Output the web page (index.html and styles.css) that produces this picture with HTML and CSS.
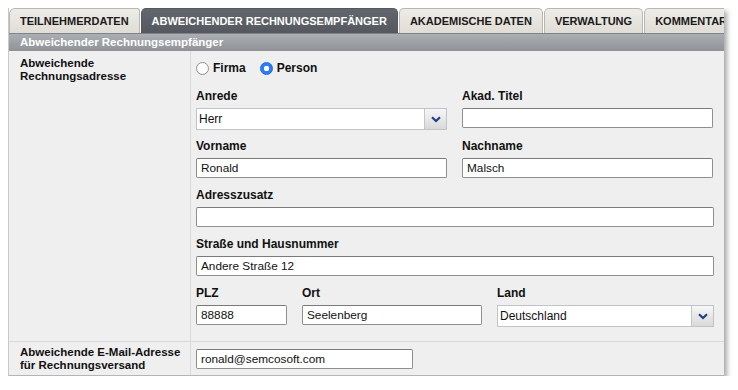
FILE: index.html
```html
<!DOCTYPE html>
<html lang="de">
<head>
	<meta charset="UTF-8">
	<title>Abweichender Rechnungsempfänger</title>
	<link rel="stylesheet" href="styles.css">
</head>
<body>
	<div class="panel">
		<!-- reiter -->
		<ul class="tabs">
			<li class="tab first">TEILNEHMERDATEN</li>
			<li class="tab active">ABWEICHENDER RECHNUNGSEMPFÄNGER</li>
			<li class="tab">AKADEMISCHE DATEN</li>
			<li class="tab">VERWALTUNG</li>
			<li class="tab last">KOMMENTAR</li>
		</ul>

		<div class="sectionTitle">Abweichender Rechnungsempfänger</div>

		<div class="row">
			<div class="rowLabel">Abweichende<br>Rechnungsadresse</div>
			<div class="rowFields">
				<div class="radios">
					<label class="radio"><input type="radio" name="typ"> Firma</label>
					<label class="radio"><input type="radio" name="typ" checked> Person</label>
				</div>

				<div class="line">
					<div class="field half">
						<div class="fieldLabel">Anrede</div>
						<div class="select">
							<span class="selectValue">Herr</span>
							<span class="selectBtn">
								<svg width="10" height="7" viewBox="0 0 10 7"><path d="M1 1.2 L5 5 L9 1.2" stroke="#1f3f86" stroke-width="2.2" fill="none"/></svg>
							</span>
						</div>
					</div>
					<div class="field half">
						<div class="fieldLabel">Akad. Titel</div>
						<input class="text" type="text" value="">
					</div>
				</div>

				<div class="line">
					<div class="field half">
						<div class="fieldLabel">Vorname</div>
						<input class="text" type="text" value="Ronald">
					</div>
					<div class="field half">
						<div class="fieldLabel">Nachname</div>
						<input class="text" type="text" value="Malsch">
					</div>
				</div>

				<div class="line">
					<div class="field full">
						<div class="fieldLabel">Adresszusatz</div>
						<input class="text" type="text" value="">
					</div>
				</div>

				<div class="line">
					<div class="field full">
						<div class="fieldLabel">Straße und Hausnummer</div>
						<input class="text" type="text" value="Andere Straße 12">
					</div>
				</div>

				<div class="line">
					<div class="field plz">
						<div class="fieldLabel">PLZ</div>
						<input class="text" type="text" value="88888">
					</div>
					<div class="field ort">
						<div class="fieldLabel">Ort</div>
						<input class="text" type="text" value="Seelenberg">
					</div>
					<div class="field land">
						<div class="fieldLabel">Land</div>
						<div class="select">
							<span class="selectValue">Deutschland</span>
							<span class="selectBtn">
								<svg width="10" height="7" viewBox="0 0 10 7"><path d="M1 1.2 L5 5 L9 1.2" stroke="#1f3f86" stroke-width="2.2" fill="none"/></svg>
							</span>
						</div>
					</div>
				</div>
			</div>
		</div>

		<div class="row mail">
			<div class="rowLabel">Abweichende E-Mail-Adresse<br>für Rechnungsversand</div>
			<div class="rowFields">
				<input class="text email" type="text" value="ronald@semcosoft.com">
			</div>
		</div>
	</div>
</body>
</html>
```

FILE: styles.css
```css
body {
	margin: 8px 0 0 8px;
	background: #FFFFFF;
	font-family: "Liberation Sans", Arial, sans-serif;
	font-size: 12px;
	color: #111111;
}

.panel {
	width: 715px;
	background: #EFEFEF;
	border-left: 1px solid #C9C9C9;
	border-bottom: 1px solid #B5B5B5;
	box-shadow: 3px 3px 5px rgba(0, 0, 0, 0.35);
	overflow: hidden;
}

/* reiter oben */
.tabs {
	display: flex;
	margin: 0;
	padding: 0;
	list-style: none;
	background: #FFFFFF;
	white-space: nowrap;
}
.tab {
	flex: none;
	height: 24px;
	line-height: 25px;
	padding: 0 10px;
	margin-right: 1px;
	font-size: 11px;
	font-weight: bold;
	color: #1A1A1A;
	background: linear-gradient(#EEECE7, #E0DDD6);
	border: 1px solid #B9B7B2;
	border-bottom: none;
	border-radius: 5px 5px 0 0;
}
.tab.first {
	border-radius: 6px 3px 0 0;
}
.tab.active {
	color: #FFFFFF;
	background: linear-gradient(#62676D, #55595F);
	border-color: #55595F;
}
.tab.last {
	margin-right: 0;
	padding-right: 0;
	border-right: none;
	border-radius: 5px 0 0 0;
	flex: 1;
	overflow: hidden;
}

.sectionTitle {
	height: 17px;
	line-height: 17px;
	padding-left: 11px;
	font-size: 11.5px;
	font-weight: bold;
	color: #FFFFFF;
	background: linear-gradient(#ABAFB3, #8F9398);
	border-top: 1px solid #7F8387;
}

.row {
	display: flex;
	border-bottom: 1px solid #D9D9D9;
}
.row:last-child {
	border-bottom: none;
}
.rowLabel {
	width: 170px;
	flex: none;
	padding: 6px 0 0 11px;
	border-right: 1px solid #DADADA;
	font-size: 11.5px;
	font-weight: bold;
	line-height: 13px;
}
.rowFields {
	flex: 1;
	padding: 10px 0 15px 5px;
}

.radios {
	display: flex;
	gap: 14px;
	height: 14px;
	margin-bottom: 14px;
}
.radio {
	display: flex;
	align-items: center;
	gap: 4px;
	font-weight: bold;
	font-size: 12px;
}
.radio input {
	-webkit-appearance: none;
	appearance: none;
	width: 13px;
	height: 13px;
	margin: 0;
	border-radius: 50%;
	border: 1px solid #8E8E8E;
	background: #FFFFFF;
}
.radio input:checked {
	border: 1px solid #1769E0;
	background: radial-gradient(circle, #FFFFFF 0 2.5px, #2C7DF2 3px);
}

.line {
	display: flex;
	gap: 15px;
	margin-bottom: 10px;
}
.line:last-child {
	margin-bottom: 0;
}
.field {
	display: flex;
	flex-direction: column;
}
.fieldLabel {
	height: 14px;
	line-height: 14px;
	margin-bottom: 5px;
	font-weight: bold;
	font-size: 12px;
}
.half { width: 251px; }
.full { width: 518px; }
.plz { width: 91px; }
.ort { width: 180px; }
.land { width: 217px; }

.text {
	box-sizing: border-box;
	width: 100%;
	height: 20px;
	margin: 0;
	padding: 0 4px;
	border: 1px solid #8F8F8F;
	border-top-color: #7A7A7A;
	border-radius: 2px;
	background: #FFFFFF;
	font-family: "Liberation Sans", Arial, sans-serif;
	font-size: 11.8px;
	color: #111111;
	outline: none;
}

.select {
	box-sizing: border-box;
	display: flex;
	height: 22px;
	margin-bottom: -1px;
	background: #FFFFFF;
	border: 1px solid #BFC3CC;
}
.selectValue {
	flex: 1;
	line-height: 20px;
	padding-left: 2px;
}
.selectBtn {
	width: 21px;
	display: flex;
	align-items: center;
	justify-content: center;
	border-left: 1px solid #C6C6C6;
	background: linear-gradient(#F6F6F6, #D9D9D9);
}

.mail .rowLabel {
	padding-top: 4px;
	padding-bottom: 3px;
}
.mail .rowFields {
	padding: 0 0 0 5px;
	display: flex;
	align-items: center;
}
.email {
	width: 217px;
}
```
